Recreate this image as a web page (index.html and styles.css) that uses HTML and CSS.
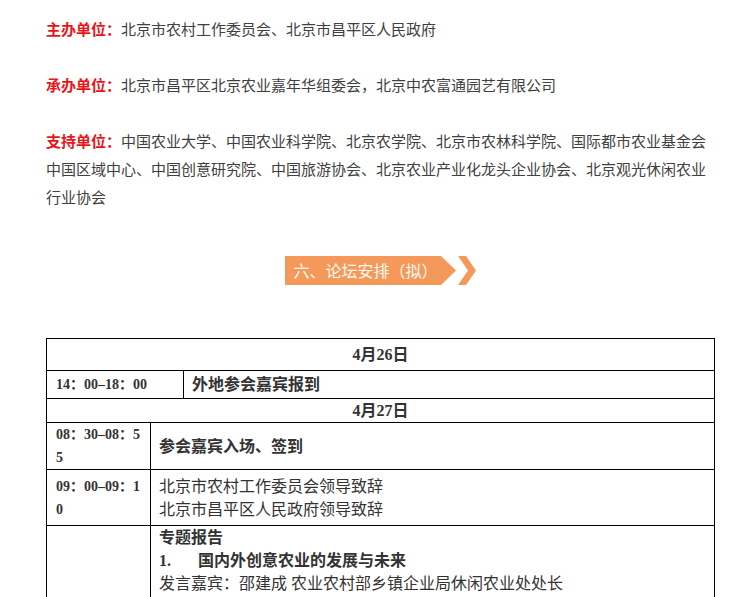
FILE: index.html
```html
<!DOCTYPE html>
<html lang="zh-CN">
<head>
<meta charset="utf-8">
<title>论坛安排</title>
<link rel="stylesheet" href="styles.css">
</head>
<body>
<div class="page">
  <p class="info"><span class="lbl">主办单位：</span>北京市农村工作委员会、北京市昌平区人民政府</p>
  <p class="info"><span class="lbl">承办单位：</span>北京市昌平区北京农业嘉年华组委会，北京中农富通园艺有限公司</p>
  <p class="info"><span class="lbl">支持单位：</span>中国农业大学、中国农业科学院、北京农学院、北京市农林科学院、国际都市农业基金会中国区域中心、中国创意研究院、中国旅游协会、北京农业产业化龙头企业协会、北京观光休闲农业行业协会</p>

  <div class="banner-wrap">
    <div class="banner">
      <span class="banner-text">六、论坛安排（拟）</span>
      <svg class="banner-arrow" width="35" height="29" viewBox="0 0 35 29">
        <polygon points="0,0 15,14.5 0,29" fill="#f4995a"/>
        <polygon points="17,0 25,0 35,14.5 25,29 17,29 27,14.5" fill="#f4995a"/>
      </svg>
    </div>
  </div>

  <table class="schedule">
    <colgroup>
      <col class="c1">
      <col class="c2">
      <col class="c3">
    </colgroup>
    <tr class="r-day1">
      <td class="day" colspan="3">4月26日</td>
    </tr>
    <tr class="r-reg">
      <td class="time" colspan="2">14：00–18：00</td>
      <td class="item strong">外地参会嘉宾报到</td>
    </tr>
    <tr class="r-day2">
      <td class="day" colspan="3">4月27日</td>
    </tr>
    <tr class="r-sign">
      <td class="time">08：30–08：55</td>
      <td class="item strong" colspan="2">参会嘉宾入场、签到</td>
    </tr>
    <tr class="r-speech">
      <td class="time">09：00–09：10</td>
      <td class="item" colspan="2">北京市农村工作委员会领导致辞<br>北京市昌平区人民政府领导致辞</td>
    </tr>
    <tr class="r-report">
      <td class="time"></td>
      <td class="item top" colspan="2">
        <div class="strong">专题报告</div>
        <div class="strong"><span class="num">1.</span>国内外创意农业的发展与未来</div>
        <div>发言嘉宾：邵建成 农业农村部乡镇企业局休闲农业处处长</div>
      </td>
    </tr>
  </table>
</div>
</body>
</html>
```

FILE: styles.css
```css
html, body {
  margin: 0;
  padding: 0;
  background: #ffffff;
}

.page {
  width: 668px;
  padding: 15px 0 0 46px;
  font-family: "Noto Sans CJK SC", sans-serif;
}

.info {
  margin: 0 0 28px;
  font-size: 15px;
  line-height: 28px;
  color: #404040;
}

.lbl {
  color: #e8151b;
  font-weight: bold;
}

.banner-wrap {
  margin-top: 45px;
  text-align: center;
  height: 29px;
}

.banner {
  display: inline-flex;
  align-items: stretch;
  height: 29px;
}

.banner-text {
  display: block;
  background: #f4995a;
  color: #fff9f0;
  font-size: 16px;
  line-height: 29px;
  padding: 0 3px 0 9px;
  width: 144px;
  text-align: left;
  white-space: nowrap;
}

.banner-arrow {
  display: block;
}

.schedule {
  margin-top: 53px;
  width: 668px;
  border-collapse: collapse;
  table-layout: fixed;
  font-family: "Liberation Serif", "Noto Sans CJK SC", serif;
  color: #333333;
}

.c1 { width: 104px; }
.c2 { width: 33px; }
.c3 { width: 531px; }

.schedule td {
  border: 1px solid #000000;
  padding: 0 8px;
  font-size: 16px;
  line-height: 23px;
  vertical-align: middle;
}

.r-day1 { height: 32px; }
.r-reg { height: 28px; }
.r-day2 { height: 24px; }
.r-sign { height: 47px; }
.r-speech { height: 56px; }
.r-report { height: 110px; }

.schedule td.day {
  text-align: center;
  font-weight: bold;
}

.schedule td.time {
  font-size: 14px;
  font-weight: bold;
  padding: 0 6px 0 9px;
  word-break: break-all;
}

.schedule td.item {
  padding-left: 8px;
}

.schedule td.top {
  vertical-align: top;
}

.strong {
  font-weight: bold;
}

.num {
  display: inline-block;
  width: 39px;
}
```
